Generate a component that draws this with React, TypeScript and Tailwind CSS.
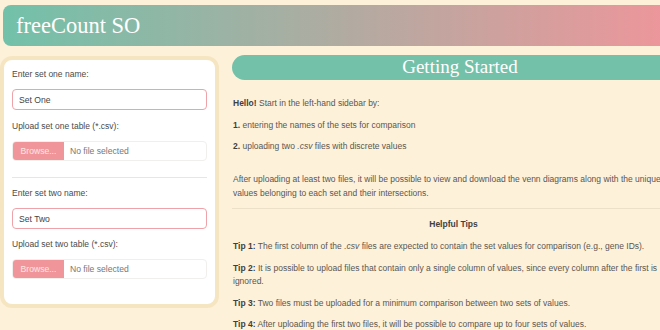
const labelClass = 'block text-[8.5px] leading-[13px] text-[#4a4a4a] mb-[8.5px]';
const inputClass =
  'block w-full h-[21px] px-[6px] rounded-[4px] border border-[#eea3a9] bg-white text-[8.6px] leading-[13px] text-[#444] outline-none';

function FileField() {
  return (
    <div className="flex h-[20px] w-full rounded-[4px] border border-[#f1efec] bg-white overflow-hidden">
      <div className="w-[51px] h-full bg-[#f0969b] text-[#fde6e1] text-[8.6px] flex items-center justify-center">
        Browse...
      </div>
      <div className="pl-[6px] flex items-center text-[8.6px] text-[#777]">No file selected</div>
    </div>
  );
}

function Sidebar() {
  return (
    <aside className="w-[219px] h-[252px] mt-[1px] shrink-0 rounded-[12px] border-[4px] border-[#f6e5c1] bg-white px-[8px] pt-[7.5px]">
      <label className={labelClass}>Enter set one name:</label>
      <input className={inputClass} defaultValue="Set One" />
      <label className={`${labelClass} mt-[9.5px]`}>Upload set one table (*.csv):</label>
      <FileField />
      <div className="mt-[16px] border-t-[1.5px] border-[#e6e6e6]" />
      <label className={`${labelClass} mt-[8.5px]`}>Enter set two name:</label>
      <input className={inputClass} defaultValue="Set Two" />
      <label className={`${labelClass} mt-[8.5px]`}>Upload set two table (*.csv):</label>
      <FileField />
    </aside>
  );
}

const tips = [
  <>
    <b className="text-[#3f3f3f]">Tip 1:</b> The first column of the <i>.csv</i> files are expected to contain the set
    values for comparison (e.g., gene IDs).
  </>,
  <>
    <b className="text-[#3f3f3f]">Tip 2:</b> It is possible to upload files that contain only a single column of values,
    since every column after the first is ignored.
  </>,
  <>
    <b className="text-[#3f3f3f]">Tip 3:</b> Two files must be uploaded for a minimum comparison between two sets of
    values.
  </>,
  <>
    <b className="text-[#3f3f3f]">Tip 4:</b> After uploading the first two files, it will be possible to compare up to
    four sets of values.
  </>,
];

function Main() {
  return (
    <main className="ml-[13px] w-[456px] shrink-0">
      <div className="h-[25px] rounded-full bg-[#74c1aa] flex items-center justify-center text-white text-[19px] font-['Liberation_Serif',Georgia,serif]">
        Getting Started
      </div>
      <div className="pl-[1px] pr-[14px] mt-[17px] text-[8.5px] leading-[13.5px] text-[#5a5651]">
        <p className="mb-[8px]">
          <b className="text-[#3f3f3f]">Hello!</b> Start in the left-hand sidebar by:
        </p>
        <p className="mb-[8px]">
          <b className="text-[#3f3f3f]">1.</b> entering the names of the sets for comparison
        </p>
        <p>
          <b className="text-[#3f3f3f]">2.</b> uploading two <i>.csv</i> files with discrete values
        </p>
        <p className="mt-[19.5px]">
          After uploading at least two files, it will be possible to view and download the venn diagrams along with
          the unique values belonging to each set and their intersections.
        </p>
      </div>
      <div className="mt-[8px] w-[456px] border-t border-[#ece0c9]" />
      <div className="pl-[1px] pr-[14px] mt-[9px] text-[8.5px] leading-[13.5px] text-[#5a5651]">
        <p className="mb-[8.5px] text-center font-bold text-[#3f3f3f]">Helpful Tips</p>
        {tips.map((t, i) => (
          <p key={i} className="mb-[8px]">
            {t}
          </p>
        ))}
      </div>
    </main>
  );
}

export default function App() {
  return (
    <div className="w-[660px] h-[330px] overflow-hidden bg-[#fdf1da] font-['Liberation_Sans',Arial,sans-serif]">
      <div className="w-[700px] pt-[5px]">
        <header className="ml-[3px] w-[680px] h-[41px] rounded-[8px] bg-[linear-gradient(to_right,#72c1a9,#f0959a)] flex items-center pl-[13px]">
          <h1 className="text-white text-[22.5px] font-['Liberation_Serif',Georgia,serif]">freeCount SO</h1>
        </header>
        <div className="flex mt-[9px]">
          <Sidebar />
          <Main />
        </div>
      </div>
    </div>
  );
}
